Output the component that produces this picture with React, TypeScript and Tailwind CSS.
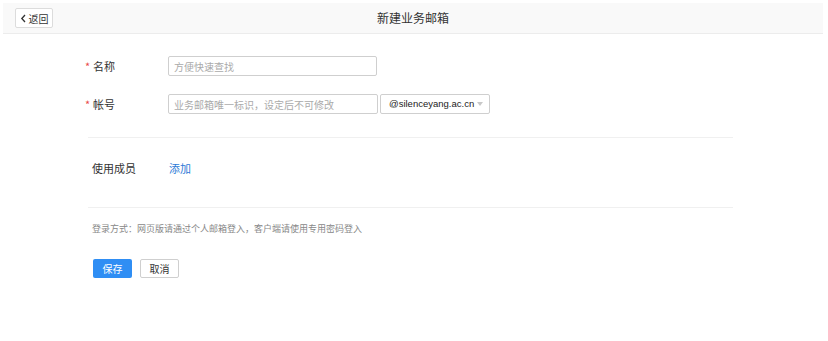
import React from 'react';

export default function App() {
  return (
    <div className="w-[828px] h-[341px] bg-white pt-[3px] px-[3px] text-[11px] text-[#333]" style={{ fontFamily: '"Microsoft YaHei", "Noto Sans CJK SC", sans-serif' }}>
      <div className="relative h-[31px] bg-[#f9f9f9] border-b border-[#ececec] flex items-center justify-center w-[820px]">
        <button className="absolute left-[12px] top-[5px] h-[20px] w-[38px] bg-white border border-[#dcdcdc] rounded-[2px] flex items-center justify-center gap-[2px] text-[10px] text-[#333]">
          <svg width="7" height="9" viewBox="0 0 7 9"><path d="M5 1 L1.8 4.5 L5 8" stroke="#333" strokeWidth="1.3" fill="none" /></svg>
          <span>返回</span>
        </button>
        <div className="text-[12px] text-[#333]">新建业务邮箱</div>
      </div>

      <div className="ml-[82px] w-[648px]">
        <div className="flex items-center h-[20px] mt-[22px]">
          <div className="w-[83px] flex items-center">
            <span className="text-[#e94b4b] w-[8px]">*</span>
            <span>名称</span>
          </div>
          <input className="w-[209px] h-[20px] border border-[#cfcfcf] rounded-[2px] px-[5px] text-[10px] outline-none placeholder:text-[#aaa]" placeholder="方便快速查找" />
        </div>
        <div className="flex items-center h-[20px] mt-[18px]">
          <div className="w-[83px] flex items-center">
            <span className="text-[#e94b4b] w-[8px]">*</span>
            <span>帐号</span>
          </div>
          <input className="w-[210px] h-[20px] border border-[#cfcfcf] rounded-[2px] px-[5px] text-[10px] outline-none placeholder:text-[#aaa]" placeholder="业务邮箱唯一标识，设定后不可修改" />
          <div className="ml-[2px] w-[110px] h-[20px] border border-[#cfcfcf] rounded-[2px] flex items-center justify-between pl-[8px] pr-[6px] text-[9.5px] text-[#222]" style={{ fontFamily: '"Liberation Sans", Arial, sans-serif' }}>
            <span>@silenceyang.ac.cn</span>
            <svg width="6" height="4" viewBox="0 0 6 4"><path d="M0 0 L6 0 L3 4 Z" fill="#c8c8c8" /></svg>
          </div>
        </div>

        <div className="h-px bg-[#f0f0f0] mt-[23px] ml-[3px]" />

        <div className="flex items-center h-[20px] mt-[20px] ml-[7px]">
          <div className="w-[77px]">使用成员</div>
          <span className="text-[#2d7ad6]">添加</span>
        </div>

        <div className="h-px bg-[#f0f0f0] mt-[29px] ml-[3px]" />

        <div className="mt-[14px] ml-[7px] text-[9px] text-[#888]">登录方式：网页版请通过个人邮箱登入，客户端请使用专用密码登入</div>

        <div className="flex mt-[23px] ml-[8px] gap-[8px]">
          <button className="w-[39px] h-[19px] bg-[#2f8ef4] text-white text-[10px] rounded-[2px] flex items-center justify-center">保存</button>
          <button className="w-[39px] h-[19px] bg-white border border-[#cfcfcf] text-[#333] text-[10px] rounded-[2px] flex items-center justify-center">取消</button>
        </div>
      </div>
    </div>
  );
}
